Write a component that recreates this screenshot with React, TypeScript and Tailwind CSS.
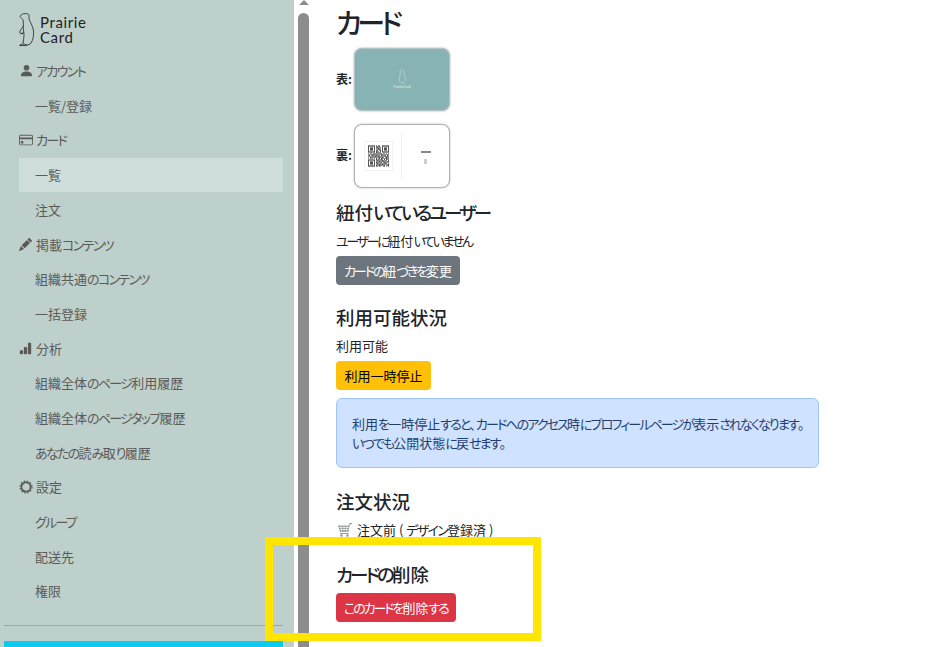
import { BsPersonFill, BsCreditCard, BsPencilFill, BsBarChartFill } from 'react-icons/bs'

const FONT = "font-['Noto_Sans_CJK_JP','Noto_Sans',sans-serif] [font-feature-settings:'palt']"

// kana in the reference runs much narrower than kanji, so tighten only those runs
function Jp({ text, kana = 'tracking-[-0.13em]' }: { text: string; kana?: string }) {
  return (
    <>
      {text.split(/([\u3040-\u30ff]+)/).map((part, i) =>
        /[\u3040-\u30ff]/.test(part) ? (
          <span key={i} className={kana}>{part}</span>
        ) : (
          part
        ),
      )}
    </>
  )
}

function GearIcon() {
  return (
    <svg width="14" height="14" viewBox="0 0 14 14" fill="none" stroke="currentColor">
      <circle cx="7" cy="7" r="4.6" strokeWidth="1.8" />
      <circle cx="7" cy="7" r="6" strokeWidth="1.2" strokeDasharray="1.6 1.54" />
    </svg>
  )
}

type NavRow = { label: string; icon?: JSX.Element; active?: boolean }

const NAV: NavRow[] = [
  { label: 'アカウント', icon: <BsPersonFill size={15} /> },
  { label: '一覧/登録' },
  { label: 'カード', icon: <BsCreditCard size={14} /> },
  { label: '一覧', active: true },
  { label: '注文' },
  { label: '掲載コンテンツ', icon: <BsPencilFill size={13} /> },
  { label: '組織共通のコンテンツ' },
  { label: '一括登録' },
  { label: '分析', icon: <BsBarChartFill size={13} /> },
  { label: '組織全体のページ利用履歴' },
  { label: '組織全体のページタップ履歴' },
  { label: 'あなたの読み取り履歴' },
  { label: '設定', icon: <GearIcon /> },
  { label: 'グループ' },
  { label: '配送先' },
  { label: '権限' },
]

function Logo() {
  return (
    <div className="flex items-center gap-[5px] pl-[18px] h-[34px] mt-[13px]">
      <svg width="17" height="34" viewBox="0 0 17 34" fill="none" stroke="#222" strokeWidth="0.8">
        <path d="M2 3.5C3 1.500 5 .5 7 .6c2 0 3.500.4 4 1.400.3 1.600-.3 3 .2 4.500 1.500 3.500 3.800 7 4.300 11.500.4 4-.3 9-2.500 12-1 1.500-3 2.500-4.500 1.500" />
        <path d="M2 3.500c.8 1.500 2.500 2 3 3.500.5 2 .5 4 .3 6.500-.3 3 .8 6 .7 9-.1 3-.8 5.500-1 8" />
        <path d="M5.500 13c-1.500 2-3.500 4.500-4 6.500 1 1 2.500 1 4 .5M2.500 21l3-1" />
        <path d="M5 31c-1.500.2-3 .5-3.500 1.500h7.500c-1-1-2-1.300-4-1.500z" />
      </svg>
      <div className="font-['Lato',sans-serif] text-[15px] leading-[15px] text-[#222] tracking-[0.6px]">
        <div>Prairie</div>
        <div>Card</div>
      </div>
    </div>
  )
}

function Sidebar() {
  return (
    <div className="w-[294px] h-full shrink-0 bg-[#bed0cc] overflow-hidden">
      <Logo />
      <div className="pl-[19px] pr-[11px] mt-[6.5px]">
        {NAV.map(row => (
          <div
            key={row.label}
            className={`h-[34.7px] flex items-center text-[13px] text-[#5c5a56] ${row.active ? 'bg-[#d0dedb]' : ''} ${row.icon ? '' : 'pl-[16px]'}`}
          >
            {row.icon && <span className="w-[17px] flex items-center">{row.icon}</span>}
            <span><Jp text={row.label} /></span>
          </div>
        ))}
      </div>
      <div className="ml-[4px] mr-[11px] mt-[16px] border-t border-[#98a8a4]" />
      <div className="ml-[4px] mr-[11px] mt-[15px] h-[8px] bg-[#0dcaf0]" />
    </div>
  )
}

function Scrollbar() {
  return (
    <div className="ml-[4px] w-[11px] shrink-0 h-full flex flex-col items-center">
      <div className="w-0 h-0 border-x-[5px] border-x-transparent border-b-[5px] border-b-[#8c8c8c]" />
      <div className="mt-[8px] w-[11px] flex-1 rounded-t-full bg-[#8c8c8c]" />
    </div>
  )
}

const QR_ROWS = [
  '111111101011001111111',
  '100000101101001000001',
  '101110100110101011101',
  '101110101011001011101',
  '101110100101101011101',
  '100000101100101000001',
  '111111101010101111111',
  '000000001101000000000',
  '101101110010110110101',
  '010011001101011001010',
  '110110111010010111011',
  '001001010111101000110',
  '101110101001011101101',
  '000000001011010010110',
  '111111101100111010101',
  '100000100111001101001',
  '101110101001110110111',
  '101110101110010011000',
  '101110100101101101101',
  '100000101011011010011',
  '111111101101100110101',
]

function QrCode() {
  return (
    <svg width="21" height="22" viewBox="0 0 21 21" className="block">
      {QR_ROWS.flatMap((row, y) =>
        row.split('').map((c, x) => (c === '1' ? <rect key={`${x}-${y}`} x={x} y={y} width="1" height="1" fill="#1c1c1c" /> : null)),
      )}
    </svg>
  )
}

function CardFront() {
  return (
    <div className="w-[96px] h-[63px] rounded-[8px] bg-[#87b3b4] border border-[#b5c4c4] shadow-[0_0_2px_rgba(0,0,0,0.4)] flex flex-col items-center justify-center">
      <svg width="8" height="15" viewBox="0 0 8 15" fill="none" stroke="#d4e4e4" strokeWidth="0.5">
        <path d="M2 2c1-2 3-2 3.500 0 .3 3 2 5 1.800 8-.2 2-1 4-3 4s-2.800-2-3-4c0-2 1-3 1-5z" />
      </svg>
      <span className="text-[3px] leading-[5px] text-[#d4e4e4] mt-[1px]">Prairie Card</span>
    </div>
  )
}

function CardBack() {
  return (
    <div className="w-[96px] h-[64px] rounded-[8px] bg-white border border-[#b0b0b0] shadow-[0_0_2px_rgba(0,0,0,0.3)] flex items-center">
      <div className="w-[47px] h-[48px] flex items-center justify-center border-r border-[#f0f0f0]">
        <div className="p-[3px] border border-[#f2f2f2]">
          <QrCode />
        </div>
      </div>
      <div className="flex-1 flex flex-col items-center gap-[6px] mt-[2px]">
        <div className="w-[10px] h-[2px] bg-[#888]" />
        <div className="w-[3px] h-[5px] bg-[#ccc]" />
      </div>
    </div>
  )
}

function CartIcon() {
  return (
    <svg width="16" height="16" viewBox="0 0 16 16" className="shrink-0">
      <path d="M1 3.500h11.500L11.500 10H3z" fill="#8f979a" />
      <path d="M1 5.500h11.200M1.700 7.500h10.200M4 3.500l.6 6.500M7 3.500V10M10 3.500 9.500 10" stroke="#fff" strokeWidth="0.6" fill="none" />
      <path d="M12.500 3.500 13 1.500h2M3 11.500h8.500" stroke="#8f979a" strokeWidth="1.100" fill="none" />
      <circle cx="4.500" cy="13.500" r="1.200" fill="#8f979a" />
      <circle cx="10.500" cy="13.500" r="1.200" fill="#8f979a" />
    </svg>
  )
}

function SectionTitle({ text }: { text: string }) {
  return (
    <h2 className="text-[18.5px] leading-[24px] font-medium text-[#212529]">
      <Jp text={text} kana="tracking-[-0.16em]" />
    </h2>
  )
}

function Content() {
  return (
    <div className="flex-1 pl-[27px] text-[#212529]">
      <h1 className="text-[28px] leading-[34px] font-medium mt-[5px]">
        <Jp text="カード" kana="tracking-[-0.16em]" />
      </h1>
      <div className="flex items-center gap-[2px] mt-[9px] text-[12px] font-bold">
        <span className="w-[16px] -mt-[2px]">表:</span>
        <CardFront />
      </div>
      <div className="flex items-center gap-[2px] mt-[13px] text-[12px] font-bold">
        <span className="w-[16px] -mt-[2px]">裏:</span>
        <CardBack />
      </div>

      <div className="mt-[12px]">
        <SectionTitle text="紐付いているユーザー" />
      </div>
      <p className="mt-[8px] text-[13px] leading-[18px]">
        <Jp text="ユーザーに紐付いていません" kana="tracking-[-0.18em]" />
      </p>
      <button className="mt-[6px] h-[28.500px] px-[8px] rounded-[4px] bg-[#6c757d] text-white text-[13px] block">
        <Jp text="カードの紐づきを変更" kana="tracking-[-0.16em]" />
      </button>

      <div className="mt-[20.500px]">
        <SectionTitle text="利用可能状況" />
      </div>
      <p className="mt-[8px] text-[13px] leading-[18px]">利用可能</p>
      <button className="mt-[6px] h-[28.500px] w-[95px] rounded-[4px] bg-[#ffc107] text-black text-[13px] block">
        利用一時停止
      </button>
      <div className="mt-[8px] w-[483px] h-[70.500px] rounded-[6px] border border-[#9ec5fe] bg-[#cfe2ff] px-[15px] flex flex-col justify-center text-[13px] leading-[19px] text-[#1f3f70] whitespace-nowrap">
        <p><Jp text="利用を一時停止すると、カードへのアクセス時にプロフィールページが表示されなくなります。" kana="tracking-[-0.145em]" /></p>
        <p><Jp text="いつでも公開状態に戻せます。" kana="tracking-[-0.145em]" /></p>
      </div>

      <div className="mt-[21px]">
        <SectionTitle text="注文状況" />
      </div>
      <div className="mt-[8px] flex items-center gap-[4px] text-[13px] leading-[18px] pl-[1px]">
        <CartIcon />
        <span>注文前 ( <Jp text="デザイン" />登録済 )</span>
      </div>

      <div className="mt-[23px]">
        <SectionTitle text="カードの削除" />
      </div>
      <button className="mt-[7px] h-[29px] px-[8px] rounded-[4px] bg-[#dc3545] text-white text-[13px] block">
        <Jp text="このカードを削除する" kana="tracking-[-0.16em]" />
      </button>

      {/* next section, only its top edge shows above the fold */}
      <div className="mt-[23px]">
        <SectionTitle text="操作ログ" />
      </div>
    </div>
  )
}

export default function App() {
  return (
    <div className={`relative w-[937px] h-[647px] bg-white overflow-hidden flex ${FONT}`}>
      <Sidebar />
      <Scrollbar />
      <Content />
      {/* yellow annotation box from the screenshot */}
      <div className="absolute left-[265px] top-[537px] w-[276px] h-[104px] border-[8px] border-[#ffe600]" />
    </div>
  )
}
